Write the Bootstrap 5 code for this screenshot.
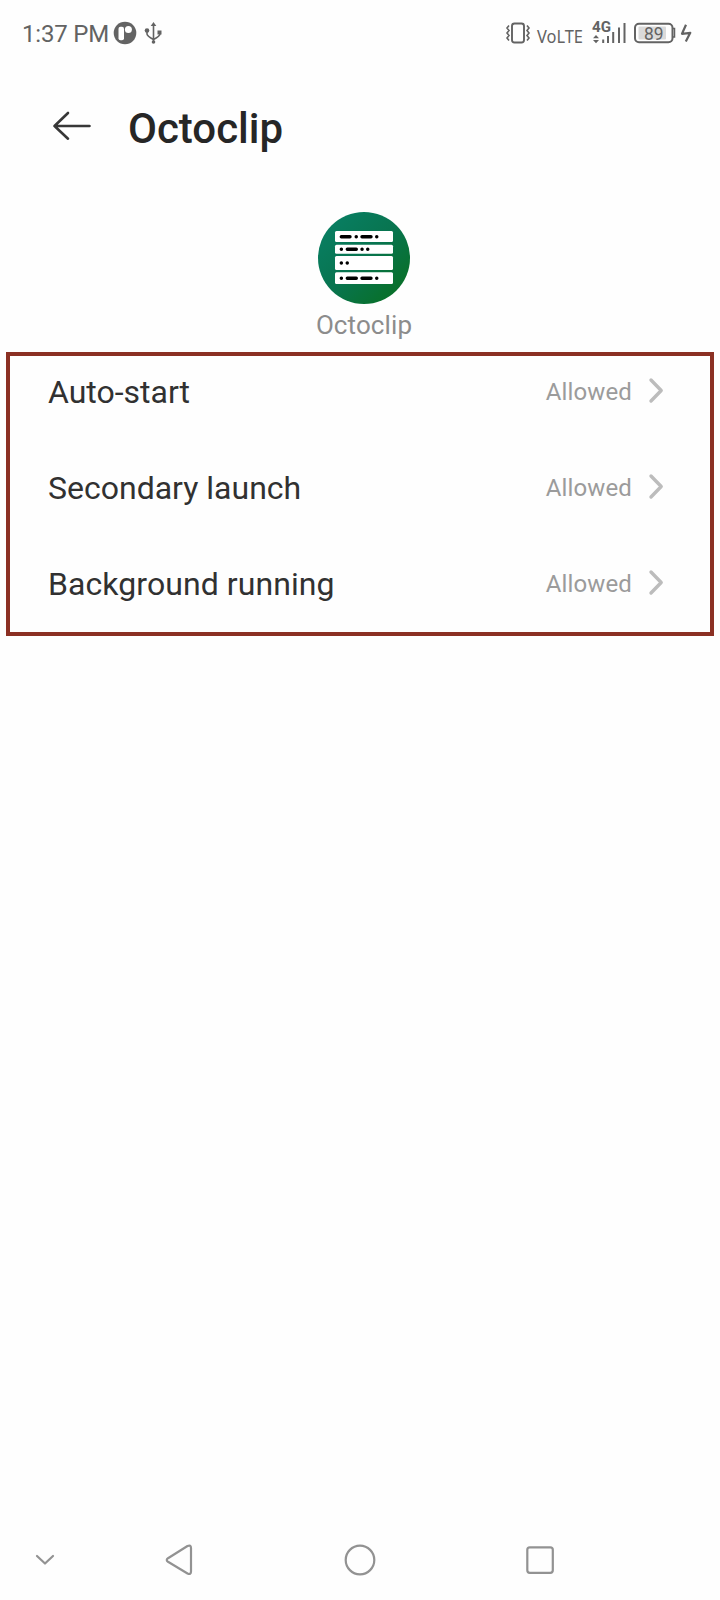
<!DOCTYPE html>
<html lang="en">
<head>
<meta charset="utf-8">
<meta name="viewport" content="width=device-width, initial-scale=1">
<title>Octoclip</title>
<link href="https://cdn.jsdelivr.net/npm/bootstrap@5.3.0/dist/css/bootstrap.min.css" rel="stylesheet">
<style>
  body { font-family: Roboto, sans-serif; background: #fefefe; color: #313131; }
  svg { display: block; flex: none; }
  .screen { width: 720px; height: 1600px; }
  .status-bar { height: 68px; padding-left: 22px; color: #636363; font-size: 24px; line-height: 68px; }
  .clock { width: 86px; letter-spacing: -.2px; }
  .title-bar { height: 120px; padding-left: 50px; }
  .title-bar h1 { font-size: 42px; font-weight: 500; line-height: 121px; color: #262626; margin: 0 0 0 36px; }
  .app-head { padding: 24px 0 0 8px; height: 164px; }
  .app-name { font-size: 26px; line-height: 42px; color: #8c8c8c; letter-spacing: .1px; }
  .perm-list { margin: 0 6px; height: 284px; border: 4px solid #8b3023; gap: 24px; }
  .perm-row { height: 72px; padding: 0 46px 0 38px; font-size: 32px; line-height: 72px; }
  .perm-row:last-child { letter-spacing: .07px; }
  .perm-state { font-size: 24px; color: #9b9b9b; letter-spacing: .12px; }
</style>
</head>
<body>
<div class="screen d-flex flex-column overflow-hidden">
  <div class="status-bar d-flex justify-content-between">
    <span class="clock text-nowrap">1:37 PM</span>
    <svg class="me-auto" width="60" height="68" viewBox="108 0 60 68" fill="none" stroke="#636363">
      <circle cx="125" cy="33" r="11.300" fill="#636363" stroke="none"/>
      <rect x="118.500" y="26.800" width="5.500" height="13.500" rx="2" fill="#fefefe" stroke="none"/>
      <circle cx="128.400" cy="29.500" r="3.500" fill="#fefefe" stroke="none"/>
      <path d="M153.500 24V43M147 31v3q0 2 6.500 5.500Q160 36 160 34v-3" stroke-width="1.600"/>
      <path d="M153.500 22l2.800 4h-5.600z" fill="#636363" stroke="none"/>
      <circle cx="147" cy="30.500" r="2.300" fill="#636363" stroke="none"/>
      <path d="M157.500 30.500h4v4h-4z" fill="#636363" stroke="none"/>
      <circle cx="153.500" cy="42" r="1.800" fill="#636363" stroke="none"/>
    </svg>
    <svg width="220" height="68" viewBox="500 0 220 68" fill="none" stroke="#636363">
      <rect x="512" y="23.500" width="12" height="19" rx="2.500" stroke-width="1.900"/>
      <path d="M509 25.500l-2 2.500 2 2.500-2 2.500 2 2.500-2 2.500 2 2.500M527 25.500l2 2.500-2 2.500 2 2.500-2 2.500 2 2.500-2 2.500" stroke-width="1.600"/>
      <text x="537" y="43.200" font-family="Noto Sans, sans-serif" font-size="18.500" textLength="46" lengthAdjust="spacingAndGlyphs" fill="#636363" stroke="none">VoLTE</text>
      <text x="592" y="32.300" font-family="Roboto, sans-serif" font-weight="700" font-size="14.500" textLength="19" lengthAdjust="spacingAndGlyphs" fill="#636363" stroke="none">4G</text>
      <path d="M596 35l3 3.300h-6zM596 43.300l3-3.300h-6z" fill="#636363" stroke="none"/>
      <path d="M603.200 39.500V43M608 36V43M613.200 32V43M619 27.500V43M624.500 23V43" stroke-width="2"/>
      <rect x="635" y="23.800" width="37.500" height="18.500" rx="4" stroke-width="2"/>
      <rect x="638.500" y="26.500" width="27.500" height="13" rx="1" fill="#dadada" stroke="none"/>
      <path d="M673 28.500h1.500v8.500H673" stroke-width="1.500"/>
      <text x="644" y="39.600" font-family="Roboto, sans-serif" font-size="17.500" textLength="19.500" lengthAdjust="spacingAndGlyphs" fill="#636363" stroke="none">89</text>
      <path d="M686 24.800l-4 9 8.300-1-4.500 8.700" stroke-width="2.200" stroke-linejoin="round"/>
    </svg>
  </div>

  <header class="title-bar d-flex">
    <svg width="42" height="120" viewBox="50 68 42 120" fill="none" stroke="#373737" stroke-width="2.600" stroke-linecap="round" stroke-linejoin="round">
      <path d="M68 113L54.500 126 68 138.700M54.500 126H89.500"/>
    </svg>
    <h1>Octoclip</h1>
  </header>

  <section class="app-head d-flex flex-column align-items-center">
    <svg width="92" height="92" viewBox="318 212 92 92">
      <defs><linearGradient id="disc" x1="0" y1="0" x2="1" y2="1">
        <stop offset=".15" stop-color="#087d60"/><stop offset=".5" stop-color="#08744f"/><stop offset=".85" stop-color="#08702b"/>
      </linearGradient></defs>
      <circle cx="364" cy="258" r="46" fill="url(#disc)"/>
      <g fill="#fff">
        <rect x="335" y="231" width="58" height="11" rx="1.500"/>
        <rect x="335" y="244.700" width="58" height="9" rx="1.500"/>
        <rect x="335" y="256" width="58" height="14" rx="1.500"/>
        <rect x="335" y="272.300" width="58" height="11.700" rx="1.500"/>
      </g>
      <path d="M341.300 236.700H350M356.200 236.700h.1M362 236.700h9M376.700 236.700h.1M341.300 249.200h.1M347.300 249.200h9M362 249.200h.1M367.700 249.200h.1M341.300 263h.1M347.200 263h.1M341.300 278.300h.1M347.300 278.300h9M362 278.300h9M376.700 278.300h.1" stroke="#000" stroke-width="3.400" stroke-linecap="round"/>
    </svg>
    <div class="app-name">Octoclip</div>
  </section>

  <main class="perm-list d-flex flex-column">
    <div class="perm-row d-flex align-items-center">
      <span class="me-auto">Auto-start</span><span class="perm-state">Allowed</span>
      <svg width="32" height="72" viewBox="632 356 32 72" fill="none" stroke="#bcbcbc" stroke-width="3.400" stroke-linecap="round" stroke-linejoin="round"><path d="M651 380l10.200 10.500L651 401"/></svg>
    </div>
    <div class="perm-row d-flex align-items-center">
      <span class="me-auto">Secondary launch</span><span class="perm-state">Allowed</span>
      <svg width="32" height="72" viewBox="632 356 32 72" fill="none" stroke="#bcbcbc" stroke-width="3.400" stroke-linecap="round" stroke-linejoin="round"><path d="M651 380l10.200 10.500L651 401"/></svg>
    </div>
    <div class="perm-row d-flex align-items-center">
      <span class="me-auto">Background running</span><span class="perm-state">Allowed</span>
      <svg width="32" height="72" viewBox="632 356 32 72" fill="none" stroke="#bcbcbc" stroke-width="3.400" stroke-linecap="round" stroke-linejoin="round"><path d="M651 380l10.200 10.500L651 401"/></svg>
    </div>
  </main>

  <nav class="mt-auto">
    <svg width="720" height="80" viewBox="0 1520 720 80" fill="none" stroke="#929292" stroke-width="2.200" stroke-linecap="round" stroke-linejoin="round">
      <path d="M37 1556l8 7.500 8-7.500"/>
      <path d="M187.500 1546Q191 1544.500 191 1548V1571.500Q191 1575 187.500 1573.500L168 1561.800Q165.500 1560 168 1558.200Z"/>
      <circle cx="360" cy="1560" r="14.300"/>
      <rect x="527.300" y="1547.300" width="25.500" height="25.500" rx="2.500"/>
    </svg>
  </nav>
</div>
<script src="https://cdn.jsdelivr.net/npm/bootstrap@5.3.0/dist/js/bootstrap.bundle.min.js"></script>
</body>
</html>
